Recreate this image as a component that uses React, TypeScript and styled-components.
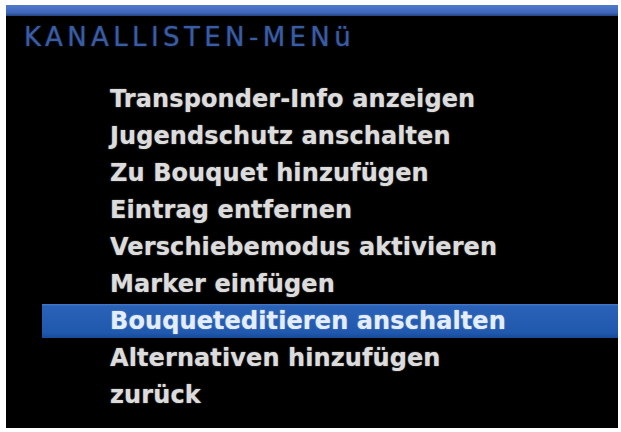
import React from "react";
import styled, { createGlobalStyle } from "styled-components";

const Global = createGlobalStyle`
  html, body { margin: 0; padding: 0; background: #ffffff; }
  body { width: 621px; height: 432px; overflow: hidden; }
`;

const Screen = styled.div`
  box-sizing: border-box;
  margin: 5px 3px 0 6px;
  width: 612px;
  height: 423px;
  background: #000000;
  border-top: 11px solid #4670c4;
  display: flex;
  flex-direction: column;
  position: relative;
  &::before {
    content: "";
    position: absolute;
    left: 0;
    right: 0;
    top: -11px;
    height: 11px;
    background: linear-gradient(#4f7acb, #3f67b9 70%, #24427e);
  }
`;

const Title = styled.h1`
  margin: 6px 0 0 18px;
  height: 30px;
  line-height: 30px;
  font-family: "DejaVu Sans", sans-serif;
  font-weight: normal;
  font-size: 26px;
  letter-spacing: 4.4px;
  color: #3a5ca4;
  text-shadow: 0 0 2px rgba(60, 92, 164, 0.6);
  white-space: nowrap;
`;

const Menu = styled.ul`
  list-style: none;
  margin: 29px 0 0 36px;
  padding: 0;
  display: flex;
  flex-direction: column;
`;

const Item = styled.li<{ $active?: boolean }>`
  height: 37px;
  line-height: 37px;
  padding-left: 68px;
  font-family: "DejaVu Sans", sans-serif;
  font-weight: bold;
  font-size: 24px;
  letter-spacing: 0.1px;
  white-space: nowrap;
  color: ${(p) => (p.$active ? "#e4eefb" : "#dcdcdc")};
  text-shadow: 0 0 1.5px rgba(255, 255, 255, 0.5);
  background: ${(p) =>
    p.$active
      ? "linear-gradient(transparent 1px, #4a7cc8 1px, #2a62b8 3px, #1f58ad 30px, #174a96 35px, transparent 35px)"
      : "transparent"};
`;

const items = [
  "Transponder-Info anzeigen",
  "Jugendschutz anschalten",
  "Zu Bouquet hinzufügen",
  "Eintrag entfernen",
  "Verschiebemodus aktivieren",
  "Marker einfügen",
  "Bouqueteditieren anschalten",
  "Alternativen hinzufügen",
  "zurück",
];

export default function App() {
  return (
    <>
      <Global />
      <Screen>
        <Title>KANALLISTEN-MENü</Title>
        <Menu>
          {items.map((t, i) => (
            <Item key={t} $active={i === 6}>
              {t}
            </Item>
          ))}
        </Menu>
      </Screen>
    </>
  );
}
